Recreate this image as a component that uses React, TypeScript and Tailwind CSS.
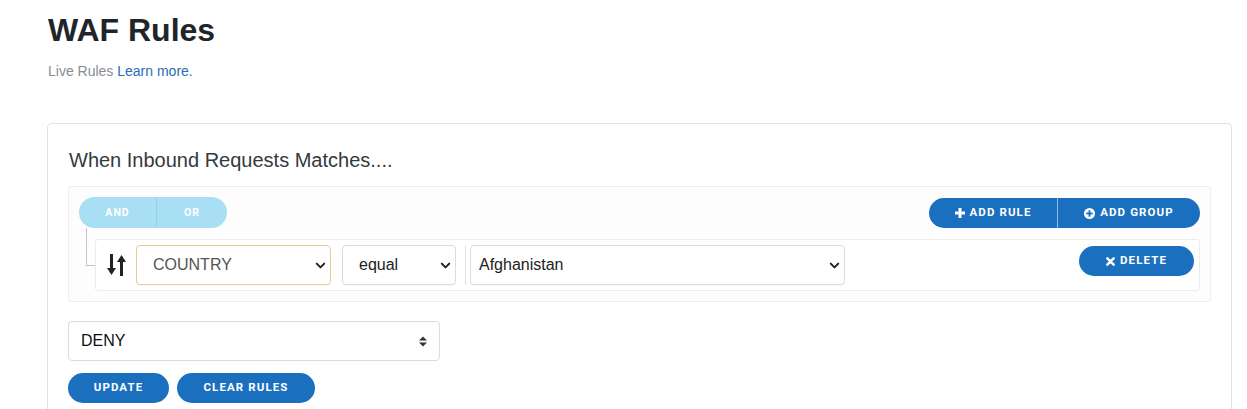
import { ChevronDown } from "lucide-react";

const blue = "bg-[#1b6fbf]";

function SortIcon() {
  return (
    <svg width="20" height="22" viewBox="0 0 20 22" className="text-[#222]">
      <rect x="3" y="0" width="3" height="15" fill="currentColor" />
      <polygon points="0,14 9,14 4.5,21" fill="currentColor" />
      <rect x="13" y="7" width="3" height="15" fill="currentColor" />
      <polygon points="10,8 19,8 14.5,1" fill="currentColor" />
    </svg>
  );
}

function PlusIcon() {
  return (
    <svg width="10" height="10" viewBox="0 0 10 10">
      <rect x="3.5" y="0" width="3" height="10" fill="white" />
      <rect x="0" y="3.5" width="10" height="3" fill="white" />
    </svg>
  );
}

function PlusCircleIcon() {
  return (
    <svg width="11" height="11" viewBox="0 0 12 12">
      <circle cx="6" cy="6" r="6" fill="white" />
      <rect x="5" y="2.5" width="2" height="7" fill="#1b6fbf" />
      <rect x="2.5" y="5" width="7" height="2" fill="#1b6fbf" />
    </svg>
  );
}

function TimesIcon() {
  return (
    <svg width="9" height="9" viewBox="0 0 10 10">
      <path d="M1.5 1.5 L8.5 8.5 M8.5 1.5 L1.5 8.5" stroke="white" strokeWidth="2.8" strokeLinecap="round" />
    </svg>
  );
}

interface SelectProps {
  value: string;
  width: string;
  border?: string;
  textColor?: string;
  pl?: string;
}

function FakeSelect({ value, width, border = "border-[#dcdcdc]", textColor = "text-[#222]", pl = "pl-4" }: SelectProps) {
  return (
    <div className={`${width} h-10 bg-white border ${border} rounded flex items-center justify-between ${pl} pr-[2px] shadow-[0_1px_1px_rgba(0,0,0,0.03)]`}>
      <span className={`text-[16px] ${textColor}`}>{value}</span>
      <ChevronDown size={15} strokeWidth={3.2} className="text-[#222]" />
    </div>
  );
}

function Pill({ children, className }: { children: React.ReactNode; className: string }) {
  return (
    <button
      className={`h-[30px] rounded-full text-white text-[11.5px] font-bold tracking-[1.1px] flex items-center justify-center gap-[5px] ${className}`}
      style={{ fontFamily: "Roboto, 'Liberation Sans', sans-serif" }}
    >
      {children}
    </button>
  );
}

export default function App() {
  return (
    <div className="min-h-[409px] bg-white pl-[47px] pt-[11px]" style={{ fontFamily: "'Liberation Sans', Arial, sans-serif" }}>
      <h1 className="text-[32px] leading-[38px] font-bold text-[#212529] pl-[1px]">WAF Rules</h1>
      <p className="mt-[12px] text-[14px] leading-5 text-[#868e96] pl-[1px]">
        Live Rules <a className="text-[#2a6db5]">Learn more.</a>
      </p>

      <div className="mt-[42px] w-[1185px] border border-[#e2e2e2] rounded-[4px] pt-[24px] px-5 pb-8">
        <h5 className="text-[20px] leading-6 text-[#333a40] pl-[1px]">When Inbound Requests Matches....</h5>

        <div className="mt-[14px] border border-[#efefef] rounded-[3px] bg-[#fdfdfd] p-[10px]">
          <div className="flex items-start justify-between">
            <div className="flex h-[31px] rounded-full bg-[#a9dff5] overflow-hidden text-white text-[10.5px] font-bold tracking-[1px]" style={{ fontFamily: "Roboto, 'Liberation Sans', sans-serif" }}>
              <div className="w-[78px] flex items-center justify-center border-r border-[#97cfe6]">AND</div>
              <div className="w-[70px] flex items-center justify-center">OR</div>
            </div>
            <div className="flex mt-[1px]">
              <Pill className={`${blue} w-[129px] rounded-r-none border-r border-[#8fbde6]`}>
                <PlusIcon />
                ADD RULE
              </Pill>
              <Pill className={`${blue} w-[142px] rounded-l-none`}>
                <PlusCircleIcon />
                ADD GROUP
              </Pill>
            </div>
          </div>

          <div className="flex mt-[11px]">
            <div className="w-[9px] ml-[7px] shrink-0 flex flex-col">
              <div className="w-[9px] border-l-[1.5px] border-b-[1.5px] border-[#c4c4c4] -mt-[11px]" style={{ height: 38 }} />
            </div>
            <div className="flex-1 border border-[#ececec] rounded-[3px] bg-white flex items-center h-[52px] pl-[11px] pr-[5px]">
              <SortIcon />
              <div className="ml-[9px] flex items-center">
                <FakeSelect value="COUNTRY" width="w-[195px]" border="border-[#e3cf96]" textColor="text-[#555]" />
                <div className="ml-[11px]">
                  <FakeSelect value="equal" width="w-[114px]" />
                </div>
                <div className="ml-[9px] w-px h-10 bg-[#e2e2e2]" />
                <div className="ml-[4px]">
                  <FakeSelect value="Afghanistan" width="w-[375px]" pl="pl-2" />
                </div>
              </div>
              <div className="ml-auto -mt-[8px]">
                <Pill className={`${blue} w-[115px]`}>
                  <TimesIcon />
                  DELETE
                </Pill>
              </div>
            </div>
          </div>
        </div>

        <div className="mt-[19px] w-[372px] h-10 border border-[#dcdcdc] rounded bg-white flex items-center justify-between pl-3 pr-3">
          <span className="text-[16px] text-[#111]">DENY</span>
          <svg width="8" height="11" viewBox="0 0 8 11">
            <polygon points="0,4.5 8,4.5 4,0.5" fill="#333" />
            <polygon points="0,6.5 8,6.5 4,10.5" fill="#333" />
          </svg>
        </div>

        <div className="mt-3 flex gap-2">
          <Pill className={`${blue} w-[101px]`}>UPDATE</Pill>
          <Pill className={`${blue} w-[138px]`}>CLEAR RULES</Pill>
        </div>
      </div>
    </div>
  );
}
